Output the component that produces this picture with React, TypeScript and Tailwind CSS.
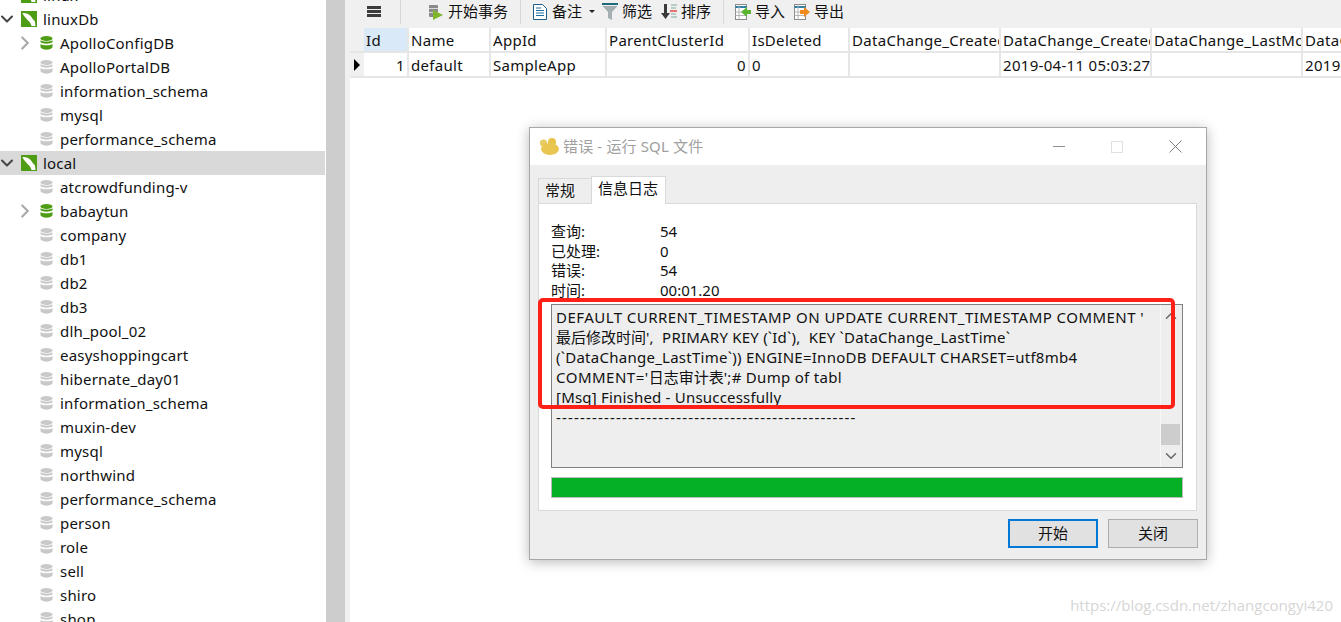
import React from "react";
import { ChevronDown, ChevronRight, ChevronUp } from "lucide-react";

const font = "font-['Noto_Sans','Noto_Sans_CJK_SC',sans-serif]";

type TreeRow = { name: string; level: 0 | 1; active?: boolean; selected?: boolean };

const rows: TreeRow[] = [
  { name: "linux", level: 0 },
  { name: "linuxDb", level: 0 },
  { name: "ApolloConfigDB", level: 1, active: true },
  { name: "ApolloPortalDB", level: 1 },
  { name: "information_schema", level: 1 },
  { name: "mysql", level: 1 },
  { name: "performance_schema", level: 1 },
  { name: "local", level: 0, selected: true },
  { name: "atcrowdfunding-v", level: 1 },
  { name: "babaytun", level: 1, active: true },
  { name: "company", level: 1 },
  { name: "db1", level: 1 },
  { name: "db2", level: 1 },
  { name: "db3", level: 1 },
  { name: "dlh_pool_02", level: 1 },
  { name: "easyshoppingcart", level: 1 },
  { name: "hibernate_day01", level: 1 },
  { name: "information_schema", level: 1 },
  { name: "muxin-dev", level: 1 },
  { name: "mysql", level: 1 },
  { name: "northwind", level: 1 },
  { name: "performance_schema", level: 1 },
  { name: "person", level: 1 },
  { name: "role", level: 1 },
  { name: "sell", level: 1 },
  { name: "shiro", level: 1 },
  { name: "shop", level: 1 },
];

function MysqlIcon() {
  return (
    <svg width="16" height="16" viewBox="0 0 16 16" className="shrink-0">
      <rect width="16" height="16" fill="#4f9d14" />
      <path d="M1.5 2 C5 1.5 8 3 10 5.5 C11.5 7.5 12.5 9 14 10.5 L14.5 15 L10.5 15 C10 12.5 8.5 10.5 6.5 9 C5.5 8 5 7 4 6 C3 5 2 3.5 1.5 2 Z" fill="#ffffff" />
    </svg>
  );
}

function DbIcon({ active }: { active?: boolean }) {
  const c = active ? "#4f9d14" : "#c9c9c9";
  return (
    <svg width="13" height="14" viewBox="0 0 13 14" className="shrink-0">
      <ellipse cx="6.5" cy="2.5" rx="6" ry="2.5" fill={c} />
      <path d="M0.5 4.2 C2 6 11 6 12.5 4.2 V6.3 C11 8.2 2 8.2 0.5 6.3 Z" fill={c} />
      <path d="M0.5 8 C2 9.8 11 9.8 12.5 8 V11.3 C11 14.6 2 14.6 0.5 11.3 Z" fill={c} />
    </svg>
  );
}

function Tree() {
  return (
    <div className="w-[326px] shrink-0 -mt-[17px] bg-white">
      {rows.map((r, i) => (
        <div key={i} className={`flex items-center h-6 mr-px ${r.selected ? "bg-[#d9d9d9]" : ""} ${r.level === 0 ? "pl-[1px]" : "pl-[20px]"}`}>
          <span className="w-5 shrink-0">
            {r.level === 0 && <ChevronDown size={20} strokeWidth={2.4} className="text-[#444] -ml-[4px]" />}
            {r.level === 1 && r.active && <ChevronRight size={22} strokeWidth={2.4} className="text-[#aaa] -ml-[6px]" />}
          </span>
          {r.level === 0 ? <MysqlIcon /> : <DbIcon active={r.active} />}
          <span className={`${r.level === 0 ? "ml-[6px]" : "ml-[7px]"} text-[15px] tracking-[0.2px] text-[#111]`}>{r.name}</span>
        </div>
      ))}
    </div>
  );
}

function ToolSep() {
  return <div className="w-px h-[25px] bg-[#d8d8d8] -mt-[1px]" />;
}

function ToolLabel({ children }: { children: React.ReactNode }) {
  return <span className="text-[15px] text-[#111] ml-[5px] whitespace-nowrap">{children}</span>;
}

function BeginIcon() {
  return (
    <svg width="16" height="18" viewBox="0 0 16 18">
      <rect x="1" y="2" width="9" height="12" rx="1" fill="#8a8a8a" />
      <rect x="1" y="5" width="9" height="1" fill="#d8d8d8" />
      <rect x="1" y="9" width="9" height="1" fill="#d8d8d8" />
      <path d="M5 7 L15 12 L5 17 Z" fill="#7fb52a" />
    </svg>
  );
}

function NoteIcon() {
  return (
    <svg width="14" height="16" viewBox="0 0 14 16">
      <path d="M0.5 0.5 H9.5 L13.5 4.5 V15.5 H0.5 Z" fill="#fff" stroke="#1d5d86" />
      <path d="M3 4 H8 M3 6.5 H11 M3 9 H11 M3 11.5 H11" stroke="#1d6fa0" strokeWidth="1.2" />
    </svg>
  );
}

function FilterIcon() {
  return (
    <svg width="16" height="17" viewBox="0 0 16 17">
      <rect width="16" height="2" fill="#1f6a78" />
      <path d="M0.5 3 H15.5 L10 9 V17 L6 15 V9 Z" fill="#a5aeb0" />
    </svg>
  );
}

function SortIcon() {
  return (
    <svg width="16" height="17" viewBox="0 0 16 17">
      <path d="M3 1 H6 V10 H9 L4.5 16 L0 10 H3 Z" fill="#3a3a3a" />
      <path d="M10 2 H16 M10 5 H15 M10 11 H15 M10 14 H16" stroke="#7ea9a0" strokeWidth="1.2" />
      <path d="M9 8 H16" stroke="#e03a3a" strokeWidth="1.4" />
    </svg>
  );
}

function TransferIcon({ color, flip }: { color: string; flip?: boolean }) {
  return (
    <svg width="16" height="16" viewBox="0 0 16 16">
      <rect x="0.5" y="0.5" width="11" height="15" fill="#fff" stroke="#8a8a8a" />
      <path d="M0.5 3 H11.5" stroke="#2f7fa8" strokeWidth="2" />
      <path d="M0.5 8 H11.5 M0.5 11.5 H11.5 M4 0.5 V15.5" stroke="#b5b5b5" />
      {flip ? (
        <path d="M6 6 H10 V3 L16 8 L10 13 V10 H6 Z" fill={color} />
      ) : (
        <path d="M16 6 H12 V3 L6 8 L12 13 V10 H16 Z" fill={color} />
      )}
    </svg>
  );
}

function Toolbar() {
  return (
    <div className="h-7 bg-[#f0f0f0] flex items-center pb-[5px]">
      <div className="flex flex-col gap-px ml-[17px]">
        <div className="w-[14px] h-[3px] bg-[#3c3c3c]" />
        <div className="w-[14px] h-[3px] bg-[#3c3c3c]" />
        <div className="w-[14px] h-[3px] bg-[#3c3c3c]" />
      </div>
      <div className="ml-[19px]"><ToolSep /></div>
      <div className="ml-[27px] flex items-center"><BeginIcon /><span className="text-[15px] text-[#111] ml-1">开始事务</span></div>
      <div className="ml-3"><ToolSep /></div>
      <div className="ml-3 flex items-center"><NoteIcon /><ToolLabel>备注</ToolLabel></div>
      <div className="ml-[7px] w-0 h-0 border-x-[3px] border-x-transparent border-t-[3px] border-t-[#222]" />
      <div className="ml-[7px] flex items-center"><FilterIcon /><span className="text-[15px] text-[#111] ml-1">筛选</span></div>
      <div className="ml-[9px] flex items-center"><SortIcon /><span className="text-[15px] text-[#111] ml-1">排序</span></div>
      <div className="ml-3"><ToolSep /></div>
      <div className="ml-[11px] flex items-center"><TransferIcon color="#5cb531" /><span className="text-[15px] text-[#111] ml-1">导入</span></div>
      <div className="ml-[9px] flex items-center"><TransferIcon color="#f08a1d" flip /><span className="text-[15px] text-[#111] ml-1">导出</span></div>
    </div>
  );
}

const cols: { title: string; w: string; value: string; right?: boolean; blue?: boolean }[] = [
  { title: "Id", w: "w-[45px]", value: "1", right: true, blue: true },
  { title: "Name", w: "w-[82px]", value: "default" },
  { title: "AppId", w: "w-[116px]", value: "SampleApp" },
  { title: "ParentClusterId", w: "w-[143px]", value: "0", right: true },
  { title: "IsDeleted", w: "w-[100px]", value: "0" },
  { title: "DataChange_CreatedBy", w: "w-[151px]", value: "" },
  { title: "DataChange_CreatedTime", w: "w-[151px]", value: "2019-04-11 05:03:27" },
  { title: "DataChange_LastModifiedBy", w: "w-[151px]", value: "" },
  { title: "DataChange_LastTime", w: "w-[151px]", value: "2019-04-11 05:03:27" },
];

function DataGrid() {
  return (
    <div className="bg-white flex-1 text-[15px] tracking-[0.3px] text-[#111] overflow-hidden">
      <div className="flex h-[25px] border-b-2 border-[#e6e6e6]">
        <div className="w-[14px] shrink-0 bg-[#f0f0f0]" />
        {cols.map((c) => (
          <div key={c.title} className={`${c.w} shrink-0 px-[2px] overflow-hidden whitespace-nowrap border-r-2 border-[#e6e6e6] leading-[24px] ${c.blue ? "bg-[#d9e9f7]" : ""}`}>
            {c.title}
          </div>
        ))}
      </div>
      <div className="flex h-[25px] border-b-2 border-[#e6e6e6]">
        <div className="w-[14px] shrink-0 bg-[#f0f0f0] flex items-center justify-center">
          <div className="w-0 h-0 border-y-[6px] border-y-transparent border-l-[6px] border-l-black" />
        </div>
        {cols.map((c) => (
          <div key={c.title} className={`${c.w} shrink-0 px-[2px] overflow-hidden whitespace-nowrap border-r-2 border-[#e6e6e6] leading-[24px] ${c.right ? "text-right" : ""}`}>
            {c.value}
          </div>
        ))}
      </div>
    </div>
  );
}

function StatRow({ label, value }: { label: string; value: string }) {
  return (
    <div className="flex h-[19.6px] leading-[20px]">
      <span className="w-[109px]">{label}</span>
      <span>{value}</span>
    </div>
  );
}

function LogBox() {
  return (
    <div className="ml-[12px] mr-[13px] mt-[5px] h-[164px] border border-[#808080] bg-[#eeeeee] flex">
      <div className="flex-1 pl-[4px] pt-[2px] leading-[20px] whitespace-nowrap overflow-hidden">
        <div className="tracking-[0.46px]">DEFAULT CURRENT_TIMESTAMP ON UPDATE CURRENT_TIMESTAMP COMMENT '</div>
        <div>最后修改时间<span className="tracking-[0.22px]">',&nbsp; PRIMARY KEY (`Id`),&nbsp; KEY `DataChange_LastTime`</span></div>
        <div className="tracking-[0.26px]">(`DataChange_LastTime`)) ENGINE=InnoDB DEFAULT CHARSET=utf8mb4</div>
        <div><span className="tracking-[0.5px]">COMMENT='</span>日志审计表<span className="tracking-[0.3px]">';# Dump of tabl</span></div>
        <div className="tracking-[0.2px]">[Msq] Finished - Unsuccessfully</div>
        <div className="tracking-[1.18px]">--------------------------------------------------</div>
      </div>
      <div className="w-[22px] shrink-0 border-l border-[#f8f8f8] flex flex-col justify-between">
        <ChevronUp size={18} strokeWidth={2} className="text-[#666] mt-[2px] ml-px" />
        <div className="flex flex-col">
          <div className="w-[19px] h-[21px] bg-[#cdcdcd]" />
          <ChevronDown size={18} strokeWidth={2} className="text-[#666] my-[2px] ml-px" />
        </div>
      </div>
    </div>
  );
}

function Dialog() {
  return (
    <div className="absolute left-[529px] top-[127px] w-[678px] h-[433px] border border-[#a8a8a8] bg-[#eeeeee] shadow-[0_2px_12px_rgba(0,0,0,0.28)] flex flex-col text-[15px] text-[#111]">
      <div className="h-[37px] bg-white flex items-center shrink-0">
        <svg width="21" height="18" viewBox="0 0 21 18" className="ml-[9px]">
          <circle cx="4.5" cy="5" r="3.6" fill="#e8cc62" />
          <circle cx="13" cy="4" r="4" fill="#e6c34a" />
          <ellipse cx="11" cy="11" rx="9" ry="6" fill="#e8c650" />
        </svg>
        <span className="ml-[3px] tracking-[0.15px] text-[#a0a0a0]">错误 - 运行 SQL 文件</span>
        <div className="ml-auto flex items-center mr-[24px]">
          <div className="w-3 h-px bg-[#909090]" />
          <div className="ml-[46px] w-3 h-3 border border-[#e0e0e0]" />
          <svg width="13" height="13" viewBox="0 0 13 13" className="ml-[46px]">
            <path d="M0.5 0.5 L12.5 12.5 M12.5 0.5 L0.5 12.5" stroke="#808080" fill="none" />
          </svg>
        </div>
      </div>
      <div className="flex items-end h-[38px] ml-[8px] mr-[9px] shrink-0">
        <div className="h-[25px] w-[54px] border border-b-0 border-[#d9d9d9] pl-[6px] leading-[22px]">常规</div>
        <div className="h-[28px] w-[75px] -ml-px border border-b-0 border-[#d9d9d9] bg-white pl-[6px] leading-[22px] -mb-px relative">信息日志</div>
      </div>
      <div className="ml-[8px] mr-[9px] h-[308px] border border-[#d9d9d9] bg-white shrink-0 flex flex-col">
        <div className="pl-[12px] pt-[17px]">
          <StatRow label="查询:" value="54" />
          <StatRow label="已处理:" value="0" />
          <StatRow label="错误:" value="54" />
          <StatRow label="时间:" value="00:01.20" />
        </div>
        <LogBox />
        <div className="ml-[12px] mr-[13px] mt-[9px] h-[21px] bg-[#06b025] border border-[#bcbcbc]" />
      </div>
      <div className="flex justify-end gap-[10px] mr-[8px] mt-[8px]">
        <button className="w-[90px] h-[29px] bg-[#e1e1e1] border-2 border-[#0078d7]">开始</button>
        <button className="w-[90px] h-[29px] bg-[#e1e1e1] border border-[#adadad]">关闭</button>
      </div>
    </div>
  );
}

export default function App() {
  return (
    <div className={`${font} relative w-[1341px] h-[622px] overflow-hidden bg-white flex`}>
      <div className="w-[326px] h-full overflow-hidden shrink-0">
        <Tree />
      </div>
      <div className="w-[19px] h-full bg-[#cdcdcd] shrink-0" />
      <div className="w-[5px] h-full bg-[#f0f0f0] shrink-0" />
      <div className="flex-1 flex flex-col min-w-0">
        <Toolbar />
        <DataGrid />
      </div>
      <Dialog />
      <div className="absolute left-[538px] top-[298px] w-[637px] h-[111px] border-[4px] border-[#ff2018] rounded-[5px]" />
      <div className="absolute right-[8px] top-[594px] text-[15px] text-[#d6d6d6] font-['Open_Sans',sans-serif]">https://blog.csdn.net/zhangcongyi420</div>
    </div>
  );
}
